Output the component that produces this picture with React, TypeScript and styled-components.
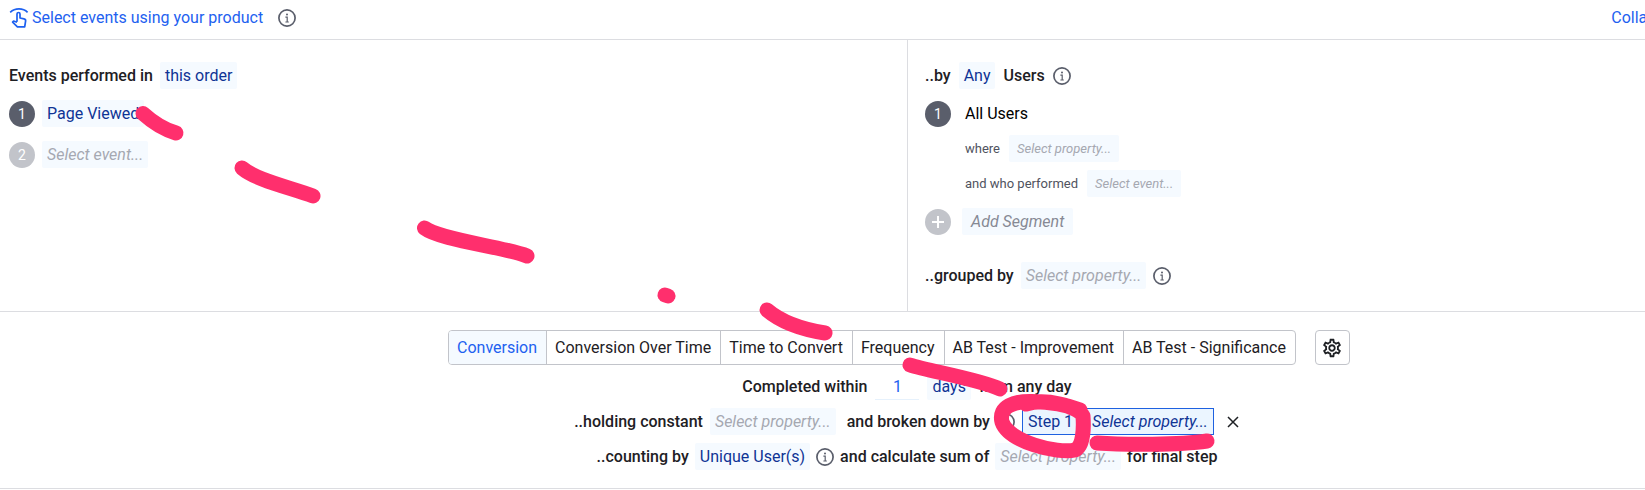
import React from "react";
import styled, { createGlobalStyle, css } from "styled-components";
import { MdOutlineSettings } from "react-icons/md";

const GlobalStyle = createGlobalStyle`
  *, *::before, *::after { box-sizing: border-box; }
  body {
    margin: 0;
    background: #fff;
    overflow: hidden;
    color: #1e2024;
    font: 400 16px/24px Roboto, "Liberation Sans", sans-serif;
  }
  button, input { font: inherit; color: inherit; margin: 0; padding: 0; border: 0; background: none; }
  button { cursor: pointer; }
`;

const Viewport = styled.div`
  position: relative;
  overflow: hidden;
`;

/* The builder runs wider than the window and is cut at its right edge. */
const Builder = styled.main`
  width: calc(100% + 169px);
`;

const TopBar = styled.header`
  display: flex;
  align-items: center;
  height: 40px;
  padding: 0 141px 4px 8px;
  border-bottom: 1px solid #dcdde1;
`;

const TextLink = styled.a`
  display: flex;
  align-items: center;
  gap: 2px;
  color: #1e61f0;
  text-decoration: none;
`;

const TopInfo = styled.span`
  display: flex;
  flex: 1;
  padding-left: 15px;
`;

const Columns = styled.div`
  display: grid;
  grid-template-columns: 1fr 1fr;
  border-bottom: 1px solid #dcdde1;
`;

const Column = styled.section<{ $divided?: boolean }>`
  padding: 22px 9px;
  ${(p) => p.$divided && css`
    padding-left: 17px;
    border-left: 1px solid #dcdde1;
  `}
`;

const Row = styled.div<{ $top?: number; $indent?: number; $gap?: number }>`
  display: flex;
  align-items: center;
  height: 27px;
  gap: ${(p) => p.$gap ?? 7}px;
  margin-top: ${(p) => p.$top ?? 0}px;
  padding-left: ${(p) => p.$indent ?? 0}px;
  white-space: nowrap;
`;

const Strong = styled.span<{ $spaced?: boolean }>`
  font-weight: 500;
  padding-left: ${(p) => (p.$spaced ? 4 : 0)}px;
`;

const Small = styled.span`
  font-size: 13px;
  color: #50535e;
`;

const Name = styled.span`
  padding-left: 7px;
  color: #000;
`;

const Chip = styled.button<{ $kind?: "value" | "empty" | "action"; $size?: "small" }>`
  height: 27px;
  padding: 0 5px;
  border-radius: 2px;
  background: #f5faff;
  color: #0f3495;
  white-space: nowrap;
  ${(p) => p.$kind === "empty" && css`
    color: #a5a8b1;
    font-style: italic;
  `}
  ${(p) => p.$kind === "action" && css`
    padding: 0 9px;
    color: #868994;
    font-style: italic;
  `}
  ${(p) => p.$size === "small" && css`
    padding: 0 8px;
    font-size: 13px;
  `}
`;

const ActiveChip = styled.button<{ $italic?: boolean }>`
  height: 27px;
  padding: 0 5px;
  border: 1px solid #1e61e0;
  background: #ebf5ff;
  color: #0f3495;
  font-style: ${(p) => (p.$italic ? "italic" : "normal")};
`;

const Badge = styled.span<{ $muted?: boolean }>`
  display: flex;
  align-items: center;
  justify-content: center;
  flex: none;
  width: 26px;
  height: 26px;
  border-radius: 50%;
  background: ${(p) => (p.$muted ? "#c2c4ca" : "#5a5e6b")};
  color: #fff;
  font-size: 14px;
`;

const Settings = styled.section`
  display: flex;
  flex-direction: column;
  align-items: center;
  padding: 18px 0;
  border-bottom: 1px solid #dcdde1;
`;

const TabBar = styled.div`
  display: flex;
  gap: 19px;
  padding-right: 16px;
  margin-bottom: 8px;
`;

const Tabs = styled.div`
  display: flex;
  border: 1px solid #c2c4ca;
  border-radius: 4px;
  overflow: hidden;
`;

const Tab = styled.button<{ $active?: boolean }>`
  height: 33px;
  padding: 0 9px 0 8px;
  white-space: nowrap;
  & + & { border-left: 1px solid #c2c4ca; }
  ${(p) => p.$active && css`
    background: #f5faff;
    color: #1e61f0;
  `}
`;

const GearButton = styled.button`
  display: flex;
  align-items: center;
  justify-content: center;
  width: 35px;
  height: 35px;
  border: 1px solid #c2c4ca;
  border-radius: 4px;
  font-size: 22px;
`;

const CountInput = styled.input`
  width: 44px;
  height: 27px;
  border-bottom: 1px solid #e6f1fc;
  color: #1e61f0;
  text-align: center;
  outline: none;
`;

const CloseButton = styled.button`
  display: flex;
  padding-left: 3px;
`;

const Ink = styled.svg`
  position: absolute;
  left: 0;
  top: 0;
  pointer-events: none;
`;

const InfoIcon = () => (
  <svg width="18" height="18" viewBox="0 0 18 18" fill="none" role="img" aria-label="More information">
    <circle cx="9" cy="9" r="8.1" stroke="#5a5e6b" strokeWidth="1.7" />
    <circle cx="9" cy="5.4" r="1" fill="#5a5e6b" />
    <path d="M7.4 8.2H9.2V12.8M7.4 13H10.8" stroke="#5a5e6b" strokeWidth="1.2" />
  </svg>
);

const TouchIcon = () => (
  <svg width="22" height="22" viewBox="0 0 22 22" fill="none" stroke="#1e61f0" strokeWidth="1.7" aria-hidden="true">
    <path d="M2.2 5.4C7 .8 15 .8 19.6 5.4" />
    <path d="M9 14.8V6.9C9 5 12 5 12 6.9V11L16 11.8C17.3 12.1 17.8 12.8 17.6 14L16.7 19.8H9.4L4.6 15.1L5.6 14L9 15.2" strokeLinejoin="round" />
  </svg>
);

const tabs = [
  "Conversion",
  "Conversion Over Time",
  "Time to Convert",
  "Frequency",
  "AB Test - Improvement",
  "AB Test - Significance",
];

const strokes = [
  "M143 113.500Q159 128 176 133",
  "M242 168C256 180 288 187 313 196",
  "M424.500 228C440 240 505 247 527 256",
  "M665 295L668 296",
  "M767 310Q787 327 825 333",
  "M910 365C928 371 978 379 1000 389",
  "M1097 443C1125 445 1180 445 1207 441",
  "M1026 404C1045 398 1078 406 1083 416C1084 430 1083 446 1075 450C1057 454 1009 442 1002 422C998 406 1015 401 1032 401.500C1055 402 1070 406 1080 410",
];

export default function App() {
  return (
    <Viewport>
      <GlobalStyle />
      <Builder>
        <TopBar>
          <TextLink href="#select">
            <TouchIcon />
            Select events using your product
          </TextLink>
          <TopInfo><InfoIcon /></TopInfo>
          <TextLink href="#collapse">Collapse</TextLink>
        </TopBar>

        <Columns>
          <Column>
            <Row>
              <Strong>Events performed in</Strong>
              <Chip>this order</Chip>
            </Row>
            <Row $top={11}>
              <Badge>1</Badge>
              <Chip>Page Viewed</Chip>
            </Row>
            <Row $top={14}>
              <Badge $muted>2</Badge>
              <Chip $kind="empty">Select event...</Chip>
            </Row>
          </Column>

          <Column $divided>
            <Row $gap={8}>
              <Strong>..by</Strong>
              <Chip>Any</Chip>
              <Strong>Users</Strong>
              <InfoIcon />
            </Row>
            <Row $top={11}>
              <Badge>1</Badge>
              <Name>All Users</Name>
            </Row>
            <Row $top={8} $indent={40} $gap={9}>
              <Small>where</Small>
              <Chip $kind="empty" $size="small">Select property...</Chip>
            </Row>
            <Row $top={8} $indent={40} $gap={9}>
              <Small>and who performed</Small>
              <Chip $kind="empty" $size="small">Select event...</Chip>
            </Row>
            <Row $top={11} $gap={11}>
              <Badge $muted>
                <svg width="12" height="12" viewBox="0 0 12 12" stroke="#fff" strokeWidth="2" aria-hidden="true">
                  <path d="M6 0V12M0 6H12" />
                </svg>
              </Badge>
              <Chip $kind="action">Add Segment</Chip>
            </Row>
            <Row $top={27}>
              <Strong>..grouped by</Strong>
              <Chip $kind="empty">Select property...</Chip>
              <InfoIcon />
            </Row>
          </Column>
        </Columns>

        <Settings>
          <TabBar>
            <Tabs role="tablist">
              {tabs.map((label, i) => (
                <Tab key={label} role="tab" aria-selected={i === 0} $active={i === 0}>{label}</Tab>
              ))}
            </Tabs>
            <GearButton aria-label="Settings"><MdOutlineSettings /></GearButton>
          </TabBar>
          <Row $gap={8}>
            <Strong as="label" htmlFor="window-length">Completed within</Strong>
            <CountInput id="window-length" defaultValue="1" />
            <Chip>days</Chip>
            <Strong>from any day</Strong>
          </Row>
          <Row $top={8}>
            <Strong>..holding constant</Strong>
            <Chip $kind="empty">Select property...</Chip>
            <Strong $spaced>and broken down by</Strong>
            <InfoIcon />
            <ActiveChip>Step 1</ActiveChip>
            <ActiveChip $italic>Select property...</ActiveChip>
            <CloseButton aria-label="Remove breakdown">
              <svg width="16" height="12" viewBox="0 0 16 12" stroke="#1e2024" strokeWidth="1.5" aria-hidden="true">
                <path d="M4 1L14 11M14 1L4 11" />
              </svg>
            </CloseButton>
          </Row>
          <Row $top={8} $gap={6}>
            <Strong>..counting by</Strong>
            <Chip>Unique User(s)</Chip>
            <InfoIcon />
            <Strong>and calculate sum of</Strong>
            <Chip $kind="empty">Select property...</Chip>
            <Strong>for final step</Strong>
          </Row>
        </Settings>
      </Builder>

      <Ink width="1645" height="490" viewBox="0 0 1645 490" fill="none" stroke="#ff2f6d" strokeWidth="15" strokeLinecap="round" strokeLinejoin="round" aria-hidden="true">
        {strokes.map((d) => <path key={d} d={d} />)}
      </Ink>
    </Viewport>
  );
}
